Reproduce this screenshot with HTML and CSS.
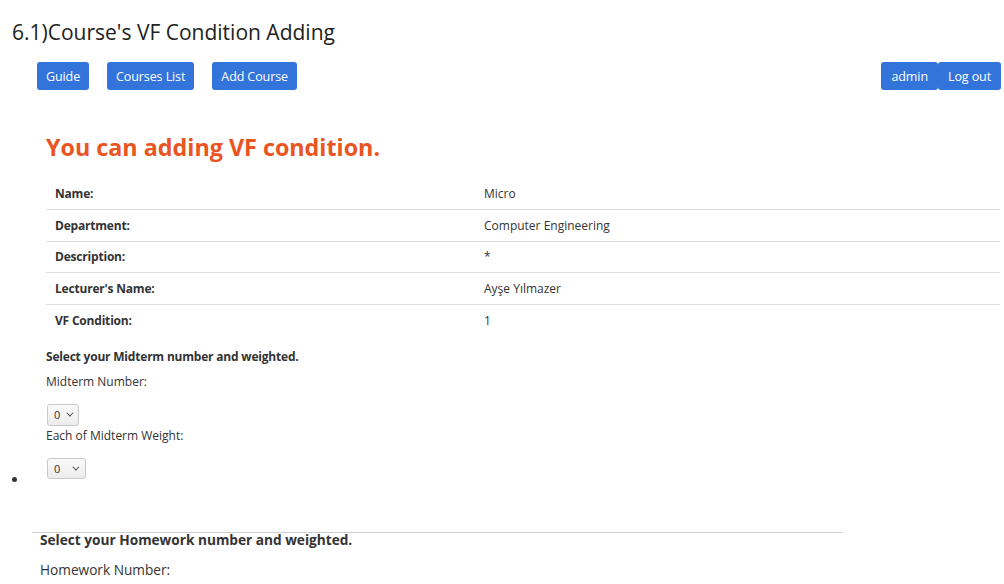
FILE: index.html
```html
<!DOCTYPE html>
<html>
<head>
<meta charset="utf-8">
<link rel="stylesheet" href="styles.css">
</head>
<body>
<h1 class="page-title">6.1)Course's VF Condition Adding</h1>
<nav class="topbar">
  <div class="nav-left">
    <a class="btn">Guide</a>
    <a class="btn">Courses List</a>
    <a class="btn">Add Course</a>
  </div>
  <div class="nav-right">
    <a class="btn btn-joined">admin</a>
    <a class="btn btn-joined">Log out</a>
  </div>
</nav>
<main class="content">
  <h2 class="heading">You can adding VF condition.</h2>
  <table class="info">
    <tr><th>Name:</th><td>Micro</td></tr>
    <tr><th>Department:</th><td>Computer Engineering</td></tr>
    <tr><th>Description:</th><td>*</td></tr>
    <tr><th>Lecturer's Name:</th><td>Ayşe Yılmazer</td></tr>
    <tr><th>VF Condition:</th><td>1</td></tr>
  </table>
</main>
<ul class="forms">
  <li class="form-item"><div class="form-block">
    <p class="form-title">Select your Midterm number and weighted.</p>
    <label class="field-label">Midterm Number:</label>
    <div class="sel sel-small">0 <span class="chev"></span></div>
    <label class="field-label field-label-tight">Each of Midterm Weight:</label>
    <div class="sel sel-wide">0 <span class="chev"></span></div>
  </div></li>
</ul>
<section class="homework">
  <hr class="divider">
  <div class="hw-inner">
    <p class="hw-title">Select your Homework number and weighted.</p>
    <p class="hw-label">Homework Number:</p>
  </div>
</section>
</body>
</html>
```
FILE: styles.css
```css
* { box-sizing: border-box; }
html, body { margin: 0; padding: 0; background: #fff; }
body {
  font-family: "Open Sans", "Noto Sans", sans-serif;
  color: #333;
  width: 1004px;
  height: 584px;
  overflow: hidden;
}
.page-title {
  margin: 0;
  padding: 18px 0 0 12px;
  font-size: 21px;
  font-weight: 400;
  color: #222;
  line-height: 28px;
  height: 62px;
}
.topbar {
  display: flex;
  justify-content: space-between;
  padding: 0 3px 0 37px;
  height: 28px;
}
.nav-left { display: flex; gap: 18px; }
.nav-right { display: flex; }
.btn {
  display: inline-flex;
  align-items: center;
  height: 28px;
  padding: 0 9px;
  background: #3374db;
  color: #fff;
  font-size: 12.5px;
  border-radius: 3px;
  text-decoration: none;
  letter-spacing: -0.1px;
}
.btn-joined { border-radius: 3px; padding: 0 10px; }
.content { padding: 0 4px 0 46px; }
.heading {
  margin: 42px 0 16px;
  font-size: 23.3px;
  font-weight: 700;
  color: #e95420;
  line-height: 30px;
}
.info { width: 100%; border-collapse: collapse; font-size: 12px; }
.info th, .info td {
  text-align: left;
  padding: 0 9px;
  height: 31.5px;
  border-top: 1px solid #dedede;
  color: #333;
}
.info tr:first-child th, .info tr:first-child td { border-top: none; }
.info th { width: 429px; font-weight: 700; letter-spacing: -0.2px; }
.forms { margin: 13px 0 0; padding: 0 0 0 29px; font-size: 14px; }
.form-item { list-style: disc; }
.form-block { display: inline-block; margin-left: 17px; overflow: hidden; font-size: 12px; padding-bottom: 6px; }
.form-title { margin: 0 0 9px; font-weight: 700; line-height: 16px; letter-spacing: -0.2px; }
.field-label { display: block; line-height: 16px; margin-bottom: 14px; }
.field-label-tight { margin-top: 2px; }
.sel {
  display: flex;
  align-items: center;
  gap: 6px;
  height: 22px;
  border: 1px solid #c8c8c8;
  border-radius: 3px;
  background: linear-gradient(#fafafa, #ececec);
  font-size: 11px;
  padding: 0 6px;
  margin-left: 1px;
}
.sel-small { width: 32px; }
.sel-wide { width: 39px; gap: 12px; height: 21px; }
.chev {
  width: 5px; height: 5px;
  border-right: 1.3px solid #444;
  border-bottom: 1.3px solid #444;
  transform: rotate(45deg) translateY(-2px);
}
.homework { margin-top: 43px; }
.divider { margin: 0 0 0 32px; width: 811px; border: 0; border-top: 1px solid #cfcfcf; }
.hw-inner { padding-left: 40px; transform: scaleX(0.91); transform-origin: 40px 0; }
.hw-title { margin: -3px 0 0; font-weight: 700; font-size: 15px; line-height: 18px; }
.hw-label { margin: 12px 0 0; font-size: 15px; line-height: 18px; }
```
